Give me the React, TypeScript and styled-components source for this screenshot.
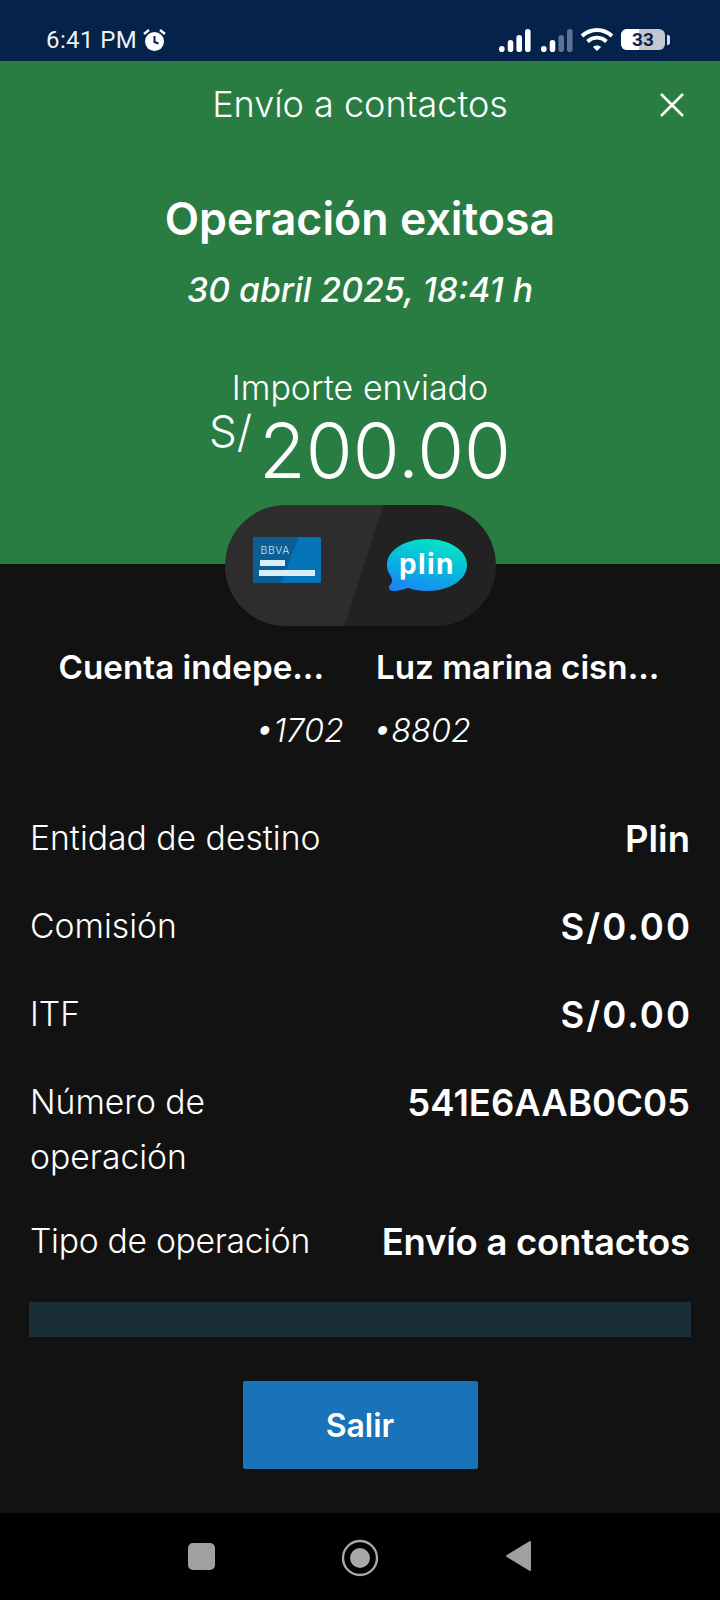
import React from "react";
import styled, { createGlobalStyle } from "styled-components";

const Global = createGlobalStyle`
  html, body { margin: 0; padding: 0; background: #121212; }
  * { box-sizing: border-box; }
`;
const FONT = `Inter, "Liberation Sans", sans-serif`;

const Phone = styled.div`
  width: 720px; height: 1600px; display: flex; flex-direction: column;
  background: #121212; color: #fff; font-family: ${FONT}; overflow: hidden;
`;
const StatusBar = styled.div`
  height: 61px; flex: none; background: #04224a; display: flex; align-items: center;
  justify-content: space-between; padding: 18px 50px 0 46px;
`;
const StatusGroup = styled.div`display: flex; align-items: center; gap: ${(p: { $gap: number }) => p.$gap}px;`;
const Time = styled.span`font: 400 24px/28px Roboto, sans-serif; color: #eef2f6; letter-spacing: 0.4px;`;
const Battery = styled.div`
  width: 44px; height: 21px; border-radius: 6px; position: relative; overflow: hidden;
  background: #c3c8d0; display: flex; align-items: center; justify-content: center;
  font: 700 19px/21px Roboto, sans-serif; color: #0a2347;
`;
const BatteryFill = styled.i`position: absolute; inset: 0 58% 0 0; background: #fff;`;
const BatteryText = styled.span`position: relative;`;
const Nub = styled.i`width: 3px; height: 10px; border-radius: 0 2px 2px 0; background: #d5d9df;`;

const Hero = styled.section`
  height: 503px; flex: none; background: #2a7d42; display: flex; flex-direction: column; align-items: center;
`;
const TitleRow = styled.header`
  width: 100%; height: 86px; display: flex; align-items: center; justify-content: center; position: relative;
`;
const Title = styled.h1`margin: 0; font-weight: 300; font-size: 36px; line-height: 86px;`;
const Close = styled.button`
  position: absolute; right: 35px; top: 31px; width: 26px; height: 26px; padding: 0; border: 0; background: none; display: block;
`;
const Heading = styled.h2`margin: 42px 0 0; font-weight: 600; font-size: 44.7px; line-height: 60px;`;
const DateLine = styled.div`margin-top: 18px; font-style: italic; font-weight: 500; font-size: 33.8px; line-height: 46px;`;
const AmountLabel = styled.div`margin-top: 52px; font-weight: 300; font-size: 34px; line-height: 46px;`;
const Amount = styled.div`
  margin-top: 2px; display: flex; align-items: flex-start; font-weight: 300; font-size: 76px; line-height: 74px;
`;
const Currency = styled.span`font-size: 44px; line-height: 40px; margin: -2px 7px 0 0;`;

const Pill = styled.div`
  width: 271px; height: 121px; flex: none; border-radius: 61px; margin: -59px auto 0; position: relative;
  background: linear-gradient(107.9deg, #2d2d2e 0 51%, #222223 51.1%);
  display: flex; align-items: center; justify-content: space-between; padding: 0 28px;
`;
const CardLogo = styled.svg`margin-bottom: 12px; flex: none;`;
const Names = styled.div`display: grid; grid-template-columns: 1fr 1fr; margin-top: 13px;`;
const NameLeft = styled.div`
  padding-right: 36px; text-align: right; font-weight: 600; font-size: 33.2px; line-height: 56px; white-space: nowrap;
`;
const NameRight = styled(NameLeft)`padding: 0 0 0 16px; text-align: left;`;
const AcctLeft = styled.div`
  margin-top: 8px; padding-right: 16px; text-align: right; font-style: italic; font-weight: 300; font-size: 32.5px; line-height: 56px;
`;
const AcctRight = styled(AcctLeft)`padding: 0 0 0 13px; text-align: left;`;
const Details = styled.div`margin-top: 51px; padding: 0 30px; display: flex; flex-direction: column;`;
const Row = styled.div<{ $pad?: number }>`
  display: flex; justify-content: space-between; align-items: flex-start; padding-bottom: ${(p) => p.$pad ?? 31}px;
`;
const Label = styled.div<{ $w?: number; $track?: number }>`
  font-weight: 300; font-size: 33.7px; line-height: 55px; max-width: ${(p) => p.$w ?? 400}px;
  letter-spacing: ${(p) => p.$track ?? 0}px;
`;
const Value = styled.div<{ $track?: number }>`
  margin-top: 2px; font-weight: 600; font-size: 36.5px; line-height: 55px; white-space: nowrap;
  letter-spacing: ${(p) => p.$track ?? 0}px; margin-right: ${(p) => -(p.$track ?? 0)}px;
`;
const Notice = styled.div`height: 35px; margin: 1px 29px 0; background: #1a2e38;`;
const Exit = styled.button`
  display: block; width: 235px; height: 88px; margin: 44px auto 0; border: 0; border-radius: 2px;
  background: #1973b8; color: #fff; font-family: ${FONT}; font-weight: 600; font-size: 32px;
`;
const NavBar = styled.nav`
  margin-top: auto; height: 87px; flex: none; background: #000; display: flex; align-items: flex-start;
  justify-content: center; gap: 126px; padding-top: 26px;
`;
const NavSquare = styled.i`display: block; width: 27px; height: 27px; margin-top: 4px; border-radius: 5px; background: #a0a0a0;`;
const NavIcon = styled.svg`display: block; flex: none;`;

const Bars = ({ dim }: { dim?: boolean }) => (
  <svg width="32" height="24" viewBox="0 0 32 24">
    {[[0, 17, 6], [8.7, 11, 12], [17.4, 6, 17], [26, 0, 23]].map(([x, y, h], i) => (
      <rect key={i} x={x} y={y + 1} width="5.6" height={h} rx="2.8"
        fill={dim && i >= 2 ? "#5f7390" : "#fff"} />
    ))}
  </svg>
);

export default function App() {
  return (
    <Phone>
      <Global />
      <StatusBar>
        <StatusGroup $gap={6}>
          <Time>6:41 PM</Time>
          <svg width="23" height="24" viewBox="0 0 23 24">
            <circle cx="11.5" cy="13.5" r="9.5" fill="#fff" />
            <path d="M11.5 8v6l4 1.5" stroke="#04224a" strokeWidth="2" fill="none" />
            <path d="M1 6l5-4M22 6l-5-4" stroke="#fff" strokeWidth="2.4" />
          </svg>
        </StatusGroup>
        <StatusGroup $gap={7}>
          <StatusGroup $gap={10}>
            <Bars />
            <Bars dim />
          </StatusGroup>
          <svg width="34" height="25" viewBox="0 0 34 25" fill="none" stroke="#fff" strokeWidth="3.8">
            <path d="M2 9c9-8 21-8 30 0" />
            <path d="M7.5 14.5c6-5 13-5 19 0" />
            <path d="M13 20l4 4 4-4c-2-2-6-2-8 0z" fill="#fff" stroke="none" />
          </svg>
          <StatusGroup $gap={2}>
            <Battery>
              <BatteryFill />
              <BatteryText>33</BatteryText>
            </Battery>
            <Nub />
          </StatusGroup>
        </StatusGroup>
      </StatusBar>
      <Hero>
        <TitleRow>
          <Title>Envío a contactos</Title>
          <Close aria-label="Cerrar">
            <svg width="26" height="26" viewBox="0 0 26 26" stroke="#fff" strokeWidth="2.6">
              <path d="M2 2l22 22M24 2L2 24" />
            </svg>
          </Close>
        </TitleRow>
        <Heading>Operación exitosa</Heading>
        <DateLine>30 abril 2025, 18:41 h</DateLine>
        <AmountLabel>Importe enviado</AmountLabel>
        <Amount>
          <Currency>S/</Currency>200.00
        </Amount>
      </Hero>
      <Pill>
        <CardLogo width="68" height="46" viewBox="0 0 68 46">
          <rect width="68" height="46" rx="1.5" fill="#0a5f95" />
          <path d="M46 0h20.5a1.5 1.5 0 0 1 1.5 1.5v43a1.5 1.5 0 0 1-1.5 1.5H28z" fill="#0574b8" />
          <text x="7.5" y="16.5" fill="#cfe6f5" fontFamily="Inter, sans-serif" fontWeight="300" fontSize="10.5" letterSpacing="0.6">BBVA</text>
          <rect x="7" y="23" width="25" height="6" fill="#d8eefa" />
          <rect x="6" y="33" width="56" height="6" fill="#d8eefa" />
        </CardLogo>
        <svg width="82" height="56" viewBox="0 0 82 56">
          <defs>
            <linearGradient id="plinG" x1="0.15" y1="1" x2="0.55" y2="0">
              <stop offset="0" stopColor="#1a82f8" />
              <stop offset="0.55" stopColor="#08b8dc" />
              <stop offset="1" stopColor="#05e2c8" />
            </linearGradient>
          </defs>
          <path d="M41 1c22 0 40 11 40 26S63 53 41 53c-7 0-13-1-19-3-4 1-10 3-14 3-3 0-5-1-5-4 0-2 3-3 3-6 0-3-1-4-2-6C2 34 1 31 1 27 1 12 19 1 41 1z" fill="url(#plinG)" />
          <text x="41" y="36" textAnchor="middle" fill="#fff" fontFamily="Inter, sans-serif" fontWeight="700" fontSize="28" letterSpacing="1.4">plin</text>
        </svg>
      </Pill>
      <Names>
        <NameLeft>Cuenta indepe...</NameLeft>
        <NameRight>Luz marina cisn...</NameRight>
        <AcctLeft>•1702</AcctLeft>
        <AcctRight>•8802</AcctRight>
      </Names>
      <Details>
        <Row><Label>Entidad de destino</Label><Value>Plin</Value></Row>
        <Row><Label>Comisión</Label><Value $track={2}>S/0.00</Value></Row>
        <Row><Label>ITF</Label><Value $track={2}>S/0.00</Value></Row>
        <Row $pad={29}><Label $w={240}>Número de operación</Label><Value>541E6AAB0C05</Value></Row>
        <Row><Label $track={-0.3}>Tipo de operación</Label><Value $track={-0.25}>Envío a contactos</Value></Row>
      </Details>
      <Notice />
      <Exit>Salir</Exit>
      <NavBar>
        <NavSquare />
        <NavIcon width="38" height="38" viewBox="0 0 38 38">
          <circle cx="19" cy="19" r="17" fill="none" stroke="#a8a8a8" strokeWidth="2.4" />
          <circle cx="19" cy="19" r="10" fill="#a8a8a8" />
        </NavIcon>
        <NavIcon width="27" height="34" viewBox="0 0 27 34">
          <path d="M25 3v28L2 17z" fill="#a0a0a0" stroke="#a0a0a0" strokeWidth="2" strokeLinejoin="round" />
        </NavIcon>
      </NavBar>
    </Phone>
  );
}
